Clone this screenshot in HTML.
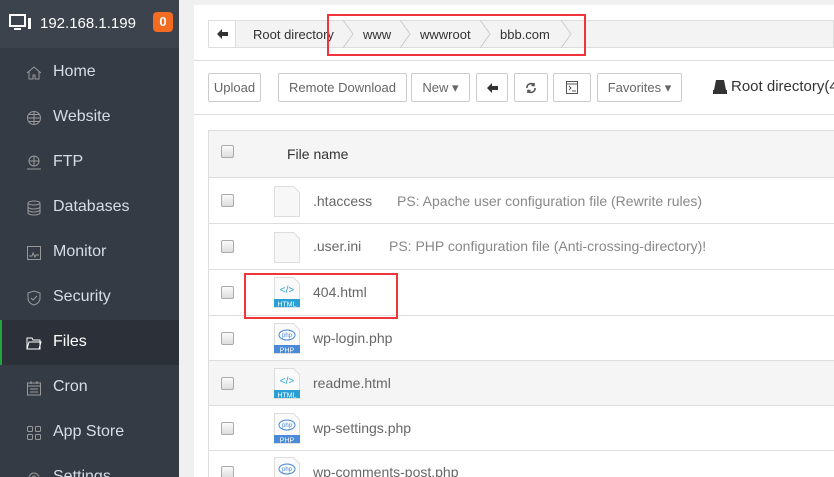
<!DOCTYPE html><html><head><style>
*{margin:0;padding:0;box-sizing:border-box}
html{width:834px;height:477px;overflow:hidden}
body{width:834px;height:477px;overflow:hidden;background:#f0f0f0;font-family:"Liberation Sans",sans-serif;position:relative}
.sb{position:absolute;left:0;top:0;width:179px;height:477px;background:#353b44;overflow:hidden}
.hd{height:48px;background:#3c434c;color:#fff;font-size:15px;position:relative}
.hd .ip{position:absolute;left:40px;top:15px}
.badge{position:absolute;left:153px;top:12px;width:20px;height:20px;background:#f36c21;border-radius:4px;color:#fff;font-weight:bold;font-size:13px;text-align:center;line-height:20px}
.sp{height:2px}
.it{height:45px;position:relative;color:#d5dde6;font-size:16px}
.it span{position:absolute;left:53px;top:13px}
.it svg{position:absolute;left:26px;top:15px}
.it.act{background:#2c3038;color:#fff;border-left:2px solid #20a53a}
.main{position:absolute;left:194px;top:5px;width:640px;height:472px;background:#fff}
.bc{position:absolute;left:208px;top:20px;width:626px;height:28px;border:1px solid #ddd;background:#f3f3f3;font-size:13px;color:#333}
.bc .back{position:absolute;left:0;top:0;width:27px;height:26px;background:#fff;border-right:1px solid #ddd}
.bc span{position:absolute;top:6px}
.line{position:absolute;left:194px;width:640px;height:1px;background:#ddd}
.btn{position:absolute;top:73px;height:29px;border:1px solid #ccc;border-radius:2px;background:#fff;font-size:13px;color:#666;text-align:center;line-height:27px}
.tb{position:absolute;left:208px;top:130px;width:626px;height:347px;border-left:1px solid #ddd}
.row{position:absolute;left:0;width:626px;border-top:1px solid #ddd;font-size:14px;color:#666}
.cb{position:absolute;left:12px;width:13px;height:13px;border:1px solid #aaa;border-radius:2px;background:linear-gradient(#fafafa,#ddd)}
.fi{position:absolute;left:65px}
.nm{position:absolute;left:104px}
.ps{position:absolute;color:#888}
.red{position:absolute;border:2px solid #f0343a}
</style></head><body>
<div class="sb">
<div class="hd"><svg style="position:absolute;left:9px;top:13px" width="23" height="20" viewBox="0 0 23 20"><rect x="1" y="2" width="15" height="11" fill="none" stroke="#fff" stroke-width="2"/><rect x="5" y="15" width="7" height="2" fill="#fff"/><rect x="19" y="5" width="3" height="11" fill="#fff"/></svg><span class="ip">192.168.1.199</span><div class="badge">0</div></div>
<div class="sp"></div>
<div class="it"><svg width="16" height="16" viewBox="0 0 16 16" fill="none" stroke="#999"><path d="M1 8L8 2l7 6M3 6v8h4v-4h2v4h4V6"/></svg><span>Home</span></div>
<div class="it"><svg width="16" height="16" viewBox="0 0 16 16" fill="none" stroke="#999"><circle cx="8" cy="8" r="6.5"/><path d="M1.5 8h13M8 1.5v13M3 4.5h10M3 11.5h10"/></svg><span>Website</span></div>
<div class="it"><svg width="16" height="16" viewBox="0 0 16 16" fill="none" stroke="#999"><circle cx="8" cy="6" r="5"/><path d="M3 6h10M8 1v10M1 14h14"/></svg><span>FTP</span></div>
<div class="it"><svg width="16" height="16" viewBox="0 0 16 16" fill="none" stroke="#999"><ellipse cx="8" cy="3" rx="6" ry="2"/><path d="M2 3v10c0 1 3 2 6 2s6-1 6-2V3M2 7c0 1 3 2 6 2s6-1 6-2M2 10c0 1 3 2 6 2s6-1 6-2"/></svg><span>Databases</span></div>
<div class="it"><svg width="16" height="16" viewBox="0 0 16 16" fill="none" stroke="#999"><rect x="1.5" y="1.5" width="13" height="13"/><path d="M3 11h3l1-3 2 4 1-2h3"/></svg><span>Monitor</span></div>
<div class="it"><svg width="16" height="16" viewBox="0 0 16 16" fill="none" stroke="#999"><path d="M8 1l6 2v5c0 4-3 6-6 7-3-1-6-3-6-7V3z"/><path d="M5 8l2 2 4-4"/></svg><span>Security</span></div>
<div class="it act"><svg style="left:24px" width="16" height="16" viewBox="0 0 16 16" fill="none" stroke="#fff"><path d="M1 3h5l1 2h7v9H1zM1 14l2-7h12l-2 7"/></svg><span style="left:51px">Files</span></div>
<div class="it"><svg width="16" height="16" viewBox="0 0 16 16" fill="none" stroke="#999"><rect x="1.5" y="3" width="13" height="12"/><path d="M1.5 6h13M5 1v3M11 1v3M4 9h8M4 12h8"/></svg><span>Cron</span></div>
<div class="it"><svg width="16" height="16" viewBox="0 0 16 16" fill="none" stroke="#999"><rect x="1.5" y="1.5" width="5" height="5" rx="1"/><rect x="9.5" y="1.5" width="5" height="5" rx="1"/><rect x="1.5" y="9.5" width="5" height="5" rx="1"/><rect x="9.5" y="9.5" width="5" height="5" rx="1"/></svg><span>App Store</span></div>
<div class="it"><svg width="16" height="16" viewBox="0 0 16 16" fill="none" stroke="#999"><circle cx="8" cy="8" r="5"/><circle cx="8" cy="8" r="2"/></svg><span>Settings</span></div>
</div>
<div class="main"></div>
<div class="bc"><div class="back"><svg style="position:absolute;left:8px;top:8px" width="11" height="10" viewBox="0 0 11 10"><path d="M0 5L5 0v3h6v4H5v3z" fill="#333"/></svg></div>
<span style="left:44px">Root directory</span>
<svg style="position:absolute;left:132px;top:-1px" width="14" height="28"><path d="M2 0l10 14L2 28" fill="none" stroke="#ccc"/></svg>
<span style="left:154px">www</span>
<svg style="position:absolute;left:189px;top:-1px" width="14" height="28"><path d="M2 0l10 14L2 28" fill="none" stroke="#ccc"/></svg>
<span style="left:211px">wwwroot</span>
<svg style="position:absolute;left:269px;top:-1px" width="14" height="28"><path d="M2 0l10 14L2 28" fill="none" stroke="#ccc"/></svg>
<span style="left:291px">bbb.com</span>
<svg style="position:absolute;left:350px;top:-1px" width="14" height="28"><path d="M2 0l10 14L2 28" fill="none" stroke="#ccc"/></svg>
</div>
<div class="line" style="top:60px"></div>
<div class="btn" style="left:208px;width:53px">Upload</div>
<div class="btn" style="left:278px;width:129px">Remote Download</div>
<div class="btn" style="left:411px;width:59px">New ▾</div>
<div class="btn" style="left:476px;width:32px"><svg width="11" height="10" viewBox="0 0 11 10" style="margin-top:9px"><path d="M0 5L5 0v3h6v4H5v3z" fill="#333"/></svg></div>
<div class="btn" style="left:514px;width:34px"><svg width="12" height="12" viewBox="0 0 12 12" style="margin-top:8px" fill="none" stroke="#555" stroke-width="1.6"><path d="M2 6a4 4 0 0 1 7-3M10 6a4 4 0 0 1-7 3"/><path d="M9 1v2.5H6.5M3 11V8.5h2.5"/></svg></div>
<div class="btn" style="left:553px;width:38px"><svg width="12" height="13" viewBox="0 0 12 13" style="margin-top:7px" fill="none" stroke="#555"><rect x=".5" y=".5" width="11" height="12"/><path d="M.5 3h11M3 5l2 2-2 2M6 10h4"/></svg></div>
<div class="btn" style="left:597px;width:85px">Favorites ▾</div>
<svg style="position:absolute;left:713px;top:80px" width="14" height="14" viewBox="0 0 14 14"><path d="M3 0h8l2 10H1z" fill="#333"/><rect x="0" y="10" width="14" height="4" fill="#333"/></svg>
<div style="position:absolute;left:731px;top:78px;font-size:15px;color:#333;white-space:nowrap">Root directory(4</div>
<div class="line" style="top:114px"></div>
<div class="tb">
<div class="row" style="top:0;height:47px;background:#f5f5f5;border-top:1px solid #ddd"><div class="cb" style="top:14px"></div><span class="nm" style="left:78px;top:15px;color:#333">File name</span></div>
<div class="row" style="top:47px;height:46px"><div class="cb" style="top:16px"></div><svg class="fi" style="top:8px" width="27" height="31"><path d="M.5 .5h19l6 6v24H.5z" fill="#f7f7f7" stroke="#ddd"/></svg><span class="nm" style="top:15px">.htaccess</span><span class="ps" style="left:188px;top:15px">PS: Apache user configuration file (Rewrite rules)</span></div>
<div class="row" style="top:93px;height:46px"><div class="cb" style="top:16px"></div><svg class="fi" style="top:8px" width="27" height="31"><path d="M.5 .5h19l6 6v24H.5z" fill="#f7f7f7" stroke="#ddd"/></svg><span class="nm" style="top:14px">.user.ini</span><span class="ps" style="left:180px;top:14px">PS: PHP configuration file (Anti-crossing-directory)!</span></div>
<div class="row" style="top:139px;height:46px"><div class="cb" style="top:16px"></div><svg class="fi" style="top:7px" width="27" height="31"><path d="M.5 .5h19l6 6v24H.5z" fill="#fafafa" stroke="#ddd"/><rect x="0" y="22" width="26" height="8" fill="#2a9fd6"/><text x="13" y="29.5" font-size="7" fill="#fff" text-anchor="middle" font-family="Liberation Sans">HTML</text><text x="13" y="16" font-size="10" fill="#2a9fd6" text-anchor="middle" font-family="Liberation Sans">&lt;/&gt;</text></svg><span class="nm" style="top:14px">404.html</span></div>
<div class="row" style="top:185px;height:45px"><div class="cb" style="top:16px"></div><svg class="fi" style="top:7px" width="27" height="31"><path d="M.5 .5h19l6 6v24H.5z" fill="#fafafa" stroke="#ddd"/><rect x="0" y="22" width="26" height="8" fill="#4a8ad8"/><text x="13" y="29.5" font-size="7" fill="#fff" text-anchor="middle" font-family="Liberation Sans">PHP</text><ellipse cx="13" cy="12" rx="8" ry="5" fill="none" stroke="#4a8ad8"/><text x="13" y="14" font-size="6" fill="#4a8ad8" text-anchor="middle" font-family="Liberation Sans">php</text></svg><span class="nm" style="top:14px">wp-login.php</span></div>
<div class="row" style="top:230px;height:45px;background:#f5f5f5"><div class="cb" style="top:16px"></div><svg class="fi" style="top:7px" width="27" height="31"><path d="M.5 .5h19l6 6v24H.5z" fill="#fafafa" stroke="#ddd"/><rect x="0" y="22" width="26" height="8" fill="#2a9fd6"/><text x="13" y="29.5" font-size="7" fill="#fff" text-anchor="middle" font-family="Liberation Sans">HTML</text><text x="13" y="16" font-size="10" fill="#2a9fd6" text-anchor="middle" font-family="Liberation Sans">&lt;/&gt;</text></svg><span class="nm" style="top:14px">readme.html</span></div>
<div class="row" style="top:275px;height:45px"><div class="cb" style="top:16px"></div><svg class="fi" style="top:7px" width="27" height="31"><path d="M.5 .5h19l6 6v24H.5z" fill="#fafafa" stroke="#ddd"/><rect x="0" y="22" width="26" height="8" fill="#4a8ad8"/><text x="13" y="29.5" font-size="7" fill="#fff" text-anchor="middle" font-family="Liberation Sans">PHP</text><ellipse cx="13" cy="12" rx="8" ry="5" fill="none" stroke="#4a8ad8"/><text x="13" y="14" font-size="6" fill="#4a8ad8" text-anchor="middle" font-family="Liberation Sans">php</text></svg><span class="nm" style="top:14px">wp-settings.php</span></div>
<div class="row" style="top:320px;height:45px"><div class="cb" style="top:15px"></div><svg class="fi" style="top:6px" width="27" height="31"><path d="M.5 .5h19l6 6v24H.5z" fill="#fafafa" stroke="#ddd"/><ellipse cx="13" cy="12" rx="8" ry="5" fill="none" stroke="#4a8ad8"/><text x="13" y="14" font-size="6" fill="#4a8ad8" text-anchor="middle" font-family="Liberation Sans">php</text></svg><span class="nm" style="top:13px">wp-comments-post.php</span></div>
</div>
<div class="red" style="left:327px;top:14px;width:259px;height:42px"></div>
<div class="red" style="left:244px;top:273px;width:154px;height:46px"></div>
</body></html>
